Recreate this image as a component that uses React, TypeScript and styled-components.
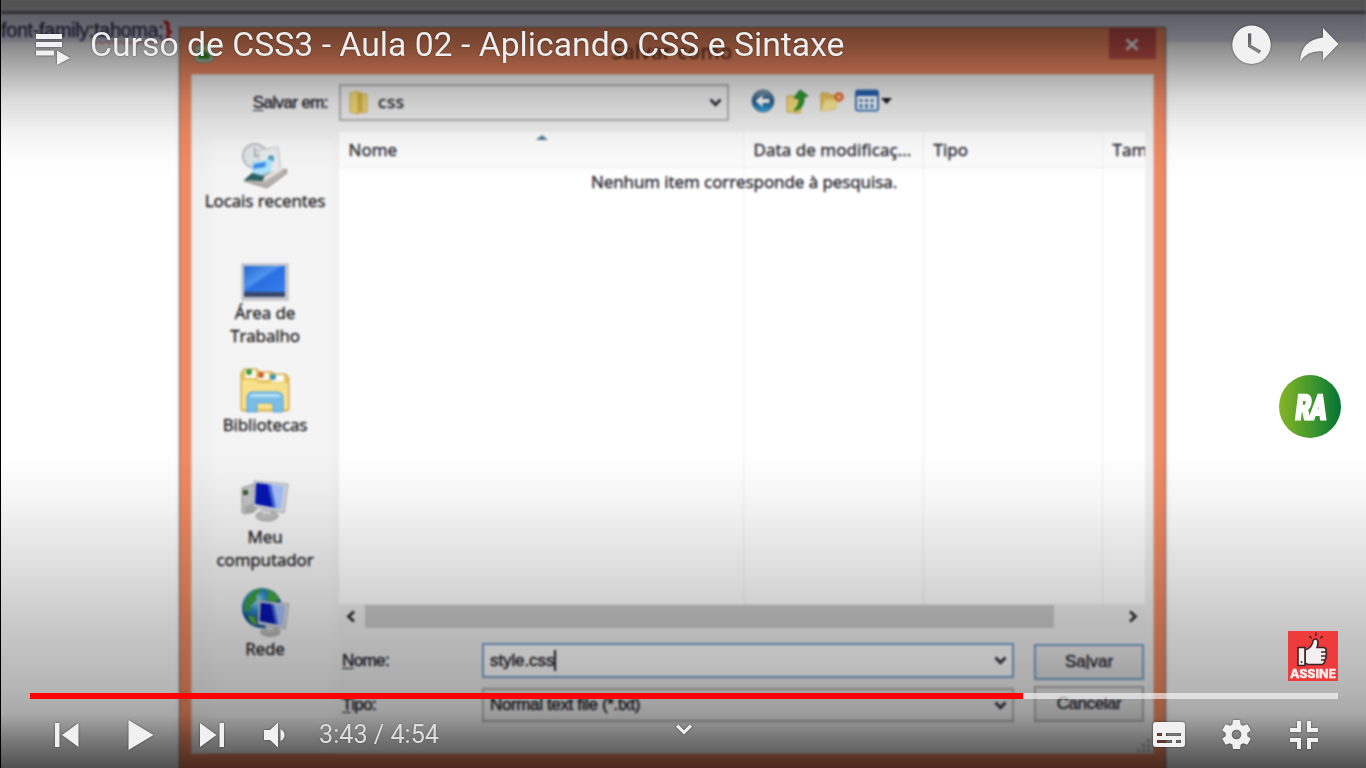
import React from 'react';
import styled, { createGlobalStyle } from 'styled-components';

const GlobalStyle = createGlobalStyle`
  body { margin: 0; background: #000; }
  *, *::before, *::after { box-sizing: border-box; }
`;

const UI = '"Open Sans", "Noto Sans", sans-serif';
const CLASSIC = '"Liberation Sans", Arial, sans-serif';

/* ---------- Page ---------- */

const Player = styled.div`
  position: relative;
  width: 1366px;
  height: 768px;
  overflow: hidden;
  background: #fff;
  border-left: 1px solid #000;
`;

const Video = styled.div`
  height: 768px;
  filter: blur(0.82px);
  -webkit-text-stroke: 0.4px currentColor;
`;

const EditorBar = styled.div`
  height: 14px;
  background: #d2d2d2;
  border-bottom: 3px solid #747474;
`;

const EditorLine = styled.div`
  height: 28px;
  padding-top: 4px;
  background: #e0e0f2;
  font: 20px/24px ${CLASSIC};
  letter-spacing: -0.4px;
  color: #33335c;
  white-space: nowrap;
`;

const Misspelled = styled.span`
  text-decoration: underline wavy #d0303a 1px;
  text-underline-offset: 3px;
`;

const Brace = styled.b`
  font-size: 22px;
  color: #e0141e;
`;

/* ---------- Dialog window ---------- */

const Dialog = styled.section`
  position: absolute;
  left: 178px;
  top: 27px;
  width: 987px;
  height: 745px;
  display: flex;
  flex-direction: column;
  padding: 0 11px 17px 11px;
  background: #f08a62;
  border: 1px solid #8d6a60;
  box-shadow: 0 0 3px rgba(80, 120, 130, 0.35);
`;

const TitleBar = styled.header`
  display: flex;
  justify-content: space-between;
  height: 46px;
  flex: none;
`;

const AppIcon = styled.svg`
  margin: 15px 0 0 3px;
`;

const DialogTitle = styled.div`
  margin-top: 10px;
  padding-left: 21px;
  font: 20.5px/26px ${UI};
  letter-spacing: 0.4px;
  color: #5c3020;
`;

const CloseButton = styled.button`
  width: 47px;
  height: 31px;
  margin-right: -2px;
  padding: 2px 0 0;
  border: 0;
  background: #c4504a;
  display: grid;
  place-items: center;
`;

const DialogBody = styled.div`
  flex: 1;
  display: flex;
  flex-direction: column;
  background: #f0f0f0;
  border: 1px solid #e2cdc6;
  padding: 9px 8px 0 11px;
`;

const LookInRow = styled.div`
  display: flex;
  align-items: center;
  height: 37px;
`;

const Label = styled.label<{ $width: number; $right?: boolean }>`
  width: ${(p) => p.$width}px;
  text-align: ${(p) => (p.$right ? 'right' : 'left')};
  font: 17px/20px ${CLASSIC};
  letter-spacing: -0.6px;
  color: #22222c;
  flex: none;
  u { text-underline-offset: 2px; }
`;

const Combo = styled.div<{ $width: number; $height: number; $active?: boolean }>`
  width: ${(p) => p.$width}px;
  height: ${(p) => p.$height}px;
  flex: none;
  display: flex;
  align-items: center;
  padding: 0 5px 0 6px;
  background: ${(p) => (p.$active ? '#fff' : '#ededed')};
  border: 2px solid ${(p) => (p.$active ? '#76a2cf' : '#b2b2b2')};
  font: 17px/20px ${CLASSIC};
  letter-spacing: -0.1px;
  color: #1c1c26;
`;

const ComboText = styled.span<{ $ui?: boolean; $tight?: boolean }>`
  flex: 1;
  display: flex;
  align-items: center;
  ${(p) => p.$tight && 'letter-spacing: -0.36px;'}
  ${(p) => p.$ui && `font: 17px/20px ${UI}; padding: 0 0 2px 7px; letter-spacing: .8px;`}
`;

const Caret = styled.i`
  width: 2px;
  height: 21px;
  background: #222;
`;

const Tools = styled.div`
  display: flex;
  align-items: center;
  gap: 10px;
  padding: 0 0 3px 22px;
`;

const Middle = styled.div`
  display: flex;
  height: 631px;
`;

const Places = styled.nav`
  width: 136px;
  margin-top: 18px;
  padding-right: 12px;
  flex: none;
  display: flex;
  flex-direction: column;
  background: linear-gradient(90deg, #f0f0f0, #f4f4f4 12%, #f4f4f4 92%, #f0f0f0);
`;

const Place = styled.div`
  height: 112px;
  text-align: center;
  white-space: pre-line;
  font: 17px/22.5px ${UI};
  letter-spacing: -0.1px;
  color: #1e1e24;
`;

const PlaceIcon = styled.div`
  height: 51px;
  display: flex;
  align-items: flex-end;
  justify-content: center;
  svg { display: block; }
`;

const PlaceName = styled.div`
  margin: 0 -4px;
`;

const Content = styled.div`
  width: 806px;
  padding-top: 11px;
  display: flex;
  flex-direction: column;
`;

const List = styled.div`
  height: 472px;
  background: #fff;
  display: flex;
  flex-direction: column;
`;

const Columns = styled.div`
  display: grid;
  grid-template-columns: 405px 180px 179px 42px;
  flex: 1;
`;

const Column = styled.div`
  border-right: 1px solid #f0f0f3;
  overflow: hidden;
  &:last-child { border-right: 0; }
`;

const ColumnHead = styled.div`
  height: 36px;
  display: flex;
  align-items: center;
  padding-left: 9.5px;
  background: #fcfcfc;
  border-bottom: 1px solid #ececef;
  font: 17px/22px ${UI};
  letter-spacing: 0.1px;
  color: #2a2a34;
  white-space: nowrap;
`;

const SortMark = styled.svg`
  margin: -25px 0 0 139px;
`;

const EmptyText = styled.div`
  margin-top: -434px;
  height: 434px;
  text-align: center;
  font: 17px/24px ${UI};
  letter-spacing: -0.06px;
  padding-left: 4px;
  color: #26262e;
`;

const Scroll = styled.div`
  height: 25px;
  display: flex;
  align-items: center;
  padding: 0 7px 0 7px;
  background: #eee;
`;

const Thumb = styled.div`
  width: 689px;
  height: 23px;
  margin: 0 auto 0 9px;
  background: #cacaca;
`;

const Form = styled.div`
  display: flex;
  padding: 14px 0 0 3px;
  gap: 20px;
`;

const Fields = styled.div`
  display: flex;
  flex-direction: column;
  gap: 10px;
`;

const Field = styled.div`
  display: flex;
  align-items: center;
`;

const Buttons = styled.div`
  display: flex;
  flex-direction: column;
  gap: 6px;
  padding-top: 1px;
`;

const Button = styled.button<{ $primary?: boolean }>`
  width: 110px;
  height: 36px;
  padding: 0;
  background: linear-gradient(#ececec, #e0e0e0);
  border: 2px solid ${(p) => (p.$primary ? '#76a2cf' : '#b0b0b0')};
  font: 17px/20px ${CLASSIC};
  letter-spacing: ${(p) => (p.$primary ? 0 : -0.45)}px;
  -webkit-text-stroke: 0.35px currentColor;
  color: #22222c;
`;

const GripRow = styled.div`
  display: flex;
  justify-content: flex-end;
  margin: -14px -6px 0 0;
`;

/* ---------- Player overlay ---------- */

const Chrome = styled.div`
  position: absolute;
  inset: 0 0 0 -1px;
  display: flex;
  flex-direction: column;
  justify-content: space-between;
  background:
    linear-gradient(rgba(0,0,0,.62) 0, rgba(0,0,0,.58) 15px, rgba(0,0,0,.48) 42px,
      rgba(0,0,0,.38) 58px, rgba(0,0,0,.27) 76px, rgba(0,0,0,.14) 100px,
      rgba(0,0,0,.06) 128px, rgba(0,0,0,.02) 150px, transparent 175px),
    linear-gradient(transparent 455px, rgba(0,0,0,.04) 500px, rgba(0,0,0,.16) 590px,
      rgba(0,0,0,.22) 630px, rgba(0,0,0,.29) 690px, rgba(0,0,0,.34) 714px,
      rgba(0,0,0,.52) 740px, rgba(0,0,0,.69) 768px);
`;

const TopBar = styled.div`
  display: flex;
  align-items: flex-start;
  padding: 24px 26px 0 34px;
`;

const VideoTitle = styled.h1`
  flex: 1;
  margin: 1px 0 0 18px;
  font: 400 33.74px/40px Roboto, sans-serif;
  color: #eee;
  text-shadow: 0 0 2px rgba(0, 0, 0, 0.5);
`;

const Glyph = styled.svg`
  display: block;
  flex: none;
  overflow: visible;
  fill: #f1f1f1;
  filter: drop-shadow(0 0 1px rgba(0, 0, 0, 0.55));
`;

const BottomArea = styled.div`
  height: 75px;
  padding: 0 28px 0 30px;
`;

const Track = styled.div`
  height: 6px;
  background: rgba(255, 255, 255, 0.6);
`;

const Played = styled.div`
  width: 993px;
  height: 6px;
  background: #f00;
`;

const Controls = styled.div`
  height: 69px;
  padding: 2px 20px 0 24px;
  display: grid;
  grid-template-columns: 623px 16px 1fr;
  align-items: center;
`;

const Collapse = styled.div`
  margin: -12px 0 0 -1px;
`;

const Cluster = styled.div<{ $end?: boolean }>`
  display: flex;
  align-items: center;
  justify-content: ${(p) => (p.$end ? 'flex-end' : 'flex-start')};
`;

const Slot = styled.div<{ $gap: number }>`
  margin-right: ${(p) => p.$gap}px;
`;

const Time = styled.div`
  font: 25.2px/30px Roboto, sans-serif;
  color: #ddd;
  text-shadow: 0 0 2px rgba(0, 0, 0, 0.4);
  white-space: nowrap;
`;

const ChannelBadge = styled.div`
  position: absolute;
  left: 1278px;
  top: 375px;
  width: 62px;
  height: 63px;
  border-radius: 50%;
  background: linear-gradient(90deg, #86b527, #45992c 50%, #027335);
`;

const SubscribeBadge = styled.div`
  position: absolute;
  left: 1287px;
  top: 631px;
  width: 50px;
  height: 50px;
  background: #ef3b3b;
  svg { display: block; }
`;

const Chevron = ({ color = '#33333a' }: { color?: string }) => (
  <svg width="13" height="9" viewBox="0 0 13 9">
    <path d="M1.5 1.5 6.5 6.8 11.5 1.5" fill="none" stroke={color} strokeWidth="2.8" />
  </svg>
);

const RecentIcon = () => (
  <svg width="48" height="48" viewBox="0 0 48 48">
    <circle cx="14" cy="14" r="12" fill="#dde2e5" stroke="#b2babf" strokeWidth="2" />
    <path d="M14 6v8h6" fill="none" stroke="#9aa3a8" strokeWidth="1.5" />
    <path d="M18 8 37 5l3 25-22 4z" fill="#e7eaec" stroke="#bcc0c2" />
    <path d="M27 15c3-3 6-2 6 2s-5 4-6 1z" fill="#4a98b8" />
    <path d="M11 20l20-3-2 17-18-2z" fill="#a9e0fa" />
    <path d="m13 22 12-2-1 5-12 2z" fill="#3c8de8" />
    <path d="M3 39 26 32 45 27 46 31 26 46z" fill="#b5b0ac" stroke="#958f8a" />
    <path d="m3 38 8-7 15 4-4 4z" fill="#2c5f62" />
    <path d="m22 40 20-12-3-2-16 9z" fill="#e6e4e0" />
  </svg>
);

const DesktopIcon = () => (
  <svg width="48" height="39" viewBox="0 0 48 39">
    <defs>
      <linearGradient id="desk" x1="0" y1="0" x2="1" y2="1">
        <stop offset="0" stopColor="#2566cf" /><stop offset=".4" stopColor="#4e93f0" />
        <stop offset=".5" stopColor="#2a6fe0" /><stop offset="1" stopColor="#3a7ff0" />
      </linearGradient>
    </defs>
    <rect x="1" y="1" width="46" height="36" fill="#c9ccd2" stroke="#a9adb5" />
    <rect x="3" y="3" width="41" height="27" fill="url(#desk)" />
    <rect x="3" y="29" width="41" height="5" fill="#39486a" />
  </svg>
);

const LibraryIcon = () => (
  <svg width="50" height="47" viewBox="0 0 50 47">
    <path d="M1 6 4 2h13l3 3h12l3 2h11l3 4v31q0 2-3 2H3q-2 0-2-2z" fill="#e6c25a" stroke="#c9a045" />
    <path d="M5 3h11v8H5zM18 6h11v7H18zM31 8h13v7H31z" fill="#fdfaf0" />
    <circle cx="9" cy="5" r="3" fill="#3c9b3c" /><circle cx="21" cy="8" r="3" fill="#d2602c" /><circle cx="33" cy="10" r="3" fill="#3d93bd" />
    <path d="M2 13h13l4 3h29v26H2z" fill="#f8e08b" />
    <path d="M7 45V31q0-6 6-6h24q6 0 6 6v14H33v-7q0-2-2-2H19q-2 0-2 2v7z" fill="#79bce6" stroke="#5aa5d8" />
    <path d="M9 30q2-3 6-3h20q5 0 6 3z" fill="#b9e2f8" />
  </svg>
);

const Monitor = ({ x, y, s = 1 }: { x: number; y: number; s?: number }) => (
  <g transform={`translate(${x} ${y}) scale(${s})`}>
    <ellipse cx="14" cy="35" rx="11" ry="5" fill="#bcbcbc" stroke="#959595" />
    <path d="M9 26h9v7H9z" fill="#d8d8d8" />
    <path d="M1 0 35 3 31 32 0 26z" fill="#d6d9dd" stroke="#a4a8ae" />
    <path d="M3 2 31 5 28 28 2 23z" fill="#a5bff8" />
    <path d="M3 2 15 3.3 20 26.5 2 23z" fill="#0716b0" />
    <path d="m15 3.3 3 .3 5 23.5-3-.6z" fill="#4067d8" />
  </g>
);

const ComputerIcon = () => (
  <svg width="48" height="46" viewBox="0 0 48 46">
    <path d="M1 8 13 4v28L3 34 1 32z" fill="#c3c4c6" stroke="#939496" />
    <path d="M2 10h5v5H2z" fill="#355c2f" />
    <path d="M3 27 16 22v8L5 34z" fill="#aaa" />
    <Monitor x={12} y={1} />
  </svg>
);

const NetworkIcon = () => (
  <svg width="49" height="51" viewBox="0 0 49 51">
    <defs>
      <radialGradient id="globe" cx=".35" cy=".3"><stop offset="0" stopColor="#a6def2" /><stop offset=".5" stopColor="#2e8fca" /><stop offset="1" stopColor="#124f98" /></radialGradient>
    </defs>
    <circle cx="21" cy="21" r="20" fill="url(#globe)" />
    <path d="M4 14Q9 3 21 1l-2 5-4 2 1 5-6 5-3 8-4-3z" fill="#3d9c46" />
    <path d="M24 2q9 1 15 10l-7 4-7-4 3-5z" fill="#48a545" />
    <path d="M7 28l7 2 2 9q-8-3-9-11z" fill="#56a93e" />
    <Monitor x={17} y={14} s={0.88} />
  </svg>
);

const places = [
  { name: 'Locais recentes', icon: <RecentIcon /> },
  { name: 'Área de\nTrabalho', icon: <DesktopIcon /> },
  { name: 'Bibliotecas', icon: <LibraryIcon /> },
  { name: 'Meu\ncomputador', icon: <ComputerIcon /> },
  { name: 'Rede', icon: <NetworkIcon /> },
];

const SaveDialog = () => (
  <Dialog>
    <TitleBar>
      <AppIcon width="20" height="20" viewBox="0 0 20 20">
        <rect x="1" y="2" width="18" height="17" rx="3" fill="#c9d4c4" stroke="#81947c" strokeWidth="1.5" />
        <path d="M4 16V9l5-3 7 6v4z" fill="#2f8f2c" />
        <path d="m8 3 5 1-1 6z" fill="#c6dc5a" />
      </AppIcon>
      <DialogTitle>Salvar como</DialogTitle>
      <CloseButton>
        <svg width="14" height="13" viewBox="0 0 14 13"><path d="m1.5 1.5 11 10m0-10-11 10" stroke="#fff" strokeWidth="2.6" /></svg>
      </CloseButton>
    </TitleBar>
    <DialogBody>
      <LookInRow>
        <Label $width={125} $right><u>S</u>alvar em:</Label>
        <div style={{ width: 11 }} />
        <Combo $width={390} $height={37}>
          <svg width="24" height="26" viewBox="0 0 24 26">
            <path d="M3 3 11 1v23l-8-2z" fill="#f0d876" stroke="#d8b850" />
            <path d="m11 3 4-1v20l-4 2z" fill="#d9b644" />
            <path d="M15 4h5v18l-5 1z" fill="#efd878" stroke="#d3b452" />
          </svg>
          <ComboText $ui>css</ComboText>
          <Chevron />
        </Combo>
        <Tools>
          <svg width="24" height="24" viewBox="0 0 24 24">
            <defs><linearGradient id="back" x1="0" y1="0" x2="0" y2="1"><stop offset="0" stopColor="#8aa0b4" /><stop offset=".5" stopColor="#205488" /><stop offset="1" stopColor="#38b0e8" /></linearGradient></defs>
            <circle cx="12" cy="12" r="11" fill="url(#back)" stroke="#4a6d90" />
            <path d="m4.500 12 7-6v4h7v4h-7v4z" fill="#fff" />
          </svg>
          <svg width="24" height="26" viewBox="0 0 24 26">
            <path d="M2 8h7l2 2h7l-3 15-13-1z" fill="#f2dc7c" stroke="#d0aa3e" />
            <path d="M9 22q6-4 5-12H9l6-8 8 6-4 1q1 9-7 13z" fill="#2f9b2f" stroke="#1c6f22" />
          </svg>
          <svg width="26" height="24" viewBox="0 0 26 24">
            <path d="M2 4h7l2 2h8v4l-3 10-14 2z" fill="#e9c75c" stroke="#cfa840" />
            <path d="m6 11 15-1-5 10-14 2z" fill="#fae898" />
            <circle cx="20" cy="8" r="3.500" fill="#f7c29a" stroke="#e66a2c" strokeWidth="2.500" />
          </svg>
          <svg width="37" height="24" viewBox="0 0 37 24">
            <rect x="1" y="1.500" width="22" height="20" rx="2" fill="#f6fafd" stroke="#3a72b4" strokeWidth="2" />
            <path d="M1 2h22v5H1z" fill="#2860b0" />
            <path d="M4.500 10h3v3h-3zm5.500 0h3v3h-3zm5.500 0h3v3h-3zM4.500 15h3v4h-3zm5.500 0h3v4h-3zm5.500 0h3v4h-3z" fill="#4d7db0" />
            <path d="M26 9h11l-5.500 6z" fill="#16161c" />
          </svg>
        </Tools>
      </LookInRow>
      <Middle>
        <Places>
          {places.map((p) => (
            <Place key={p.name}>
              <PlaceIcon>{p.icon}</PlaceIcon>
              <PlaceName>{p.name}</PlaceName>
            </Place>
          ))}
        </Places>
        <Content>
          <List>
            <Columns>
              <Column>
                <ColumnHead>
                  Nome
                  <SortMark width="12" height="7" viewBox="0 0 12 7"><path d="m0 6 6-5 6 5z" fill="#587c92" /></SortMark>
                </ColumnHead>
              </Column>
              <Column><ColumnHead>Data de modificaç...</ColumnHead></Column>
              <Column><ColumnHead>Tipo</ColumnHead></Column>
              <Column><ColumnHead>Tam</ColumnHead></Column>
            </Columns>
            <EmptyText>Nenhum item corresponde à pesquisa.</EmptyText>
          </List>
          <Scroll>
            <svg width="10" height="13" viewBox="0 0 10 13"><path d="M8 1.500 2.500 6.500 8 11.500" fill="none" stroke="#2c2c32" strokeWidth="2.800" /></svg>
            <Thumb />
            <svg width="10" height="13" viewBox="0 0 10 13"><path d="m2 1.500 5.500 5L2 11.500" fill="none" stroke="#2c2c32" strokeWidth="2.800" /></svg>
          </Scroll>
          <Form>
            <Fields>
              <Field>
                <Label $width={140}><u>N</u>ome:</Label>
                <Combo $width={532} $height={35} $active>
                  <ComboText>style.css<Caret /></ComboText>
                  <Chevron />
                </Combo>
              </Field>
              <Field>
                <Label $width={140}><u>T</u>ipo:</Label>
                <Combo $width={532} $height={34}>
                  <ComboText $tight>Normal text file (*.txt)</ComboText>
                  <Chevron />
                </Combo>
              </Field>
            </Fields>
            <Buttons>
              <Button $primary>Sa<u>l</u>var</Button>
              <Button>Cancelar</Button>
            </Buttons>
          </Form>
        </Content>
      </Middle>
      <GripRow>
        <svg width="14" height="14" viewBox="0 0 14 14"><path d="M10 1h3v3h-3zM10 6h3v3h-3zM5 6h3v3H5zM10 11h3v3h-3zM5 11h3v3H5zM0 11h3v3H0z" fill="#b4b4b4" /></svg>
      </GripRow>
    </DialogBody>
  </Dialog>
);

export default function App() {
  return (
    <>
      <GlobalStyle />
      <Player>
        <Video>
          <EditorBar />
          <EditorLine>font-family:<Misspelled>tahoma</Misspelled>;<Brace>{'}'}</Brace></EditorLine>
          <SaveDialog />
        </Video>
        <Chrome>
          <TopBar>
            <Glyph width="38" height="44" viewBox="0 0 38 44">
              <path d="M2 10h26v5H2zM2 18h26v5H2zM2 26.500h18v5H2zM23 26.500 36 34 23 41z" />
            </Glyph>
            <VideoTitle>Curso de CSS3 - Aula 02 - Aplicando CSS e Sintaxe</VideoTitle>
            <Glyph width="40" height="42" viewBox="0 0 40 42">
              <path fillRule="evenodd" d="M19.500 1.500a19 19 0 1 0 0 38.500 19 19 0 0 0 0-38.500zM16 9.500h3.200v11.500l9.800 5.700-1.900 2.800L16 22.800z" />
            </Glyph>
            <div style={{ width: 26 }} />
            <Glyph width="42" height="42" viewBox="0 0 42 42">
              <path d="M25 4 40.500 20 25 36V27.500Q10 26 2 37.500 3 16 25 13.500z" />
            </Glyph>
          </TopBar>
          <BottomArea>
            <Track><Played /></Track>
            <Controls>
              <Cluster>
                <Slot $gap={49}><Glyph width="25" height="24" viewBox="0 0 25 24"><path d="M1 0h4.500v24H1zM24.500 0v24L8 12z" /></Glyph></Slot>
                <Slot $gap={46}><Glyph width="26" height="30" viewBox="0 0 26 30"><path d="M.5 0 25.500 15 .5 30z" /></Glyph></Slot>
                <Slot $gap={39}><Glyph width="25" height="24" viewBox="0.5 0 25 24"><path d="M.5 0 17 12 .5 24zM20 0h4.500v24H20z" /></Glyph></Slot>
                <Slot $gap={34}><Glyph width="21" height="26" viewBox="0 0 21 26"><path d="M0 8h6l8-7.500v25L6 18H0zM16.500 7q4 2 4 6t-4 6z" /></Glyph></Slot>
                <Time>3:43 / 4:54</Time>
              </Cluster>
              <Collapse>
                <Glyph width="16" height="14" viewBox="0 2 16 14"><path d="M2.200 4.500 8 10.200l5.800-5.700L16 6.700 8 14.500 0 6.700z" /></Glyph>
              </Collapse>
              <Cluster $end>
                <Slot $gap={37}><Glyph width="32" height="25" viewBox="0 0 32 25"><path fillRule="evenodd" d="M3 0h26q3 0 3 3v19q0 3-3 3H3q-3 0-3-3V3q0-3 3-3zM4 11v3h5v-3zm9 0v3h15v-3zM4 18v3h15v-3zm19 0v3h5v-3z" /></Glyph></Slot>
                <Slot $gap={39}>
                  <Glyph width="29" height="29" viewBox="2 2 20 20">
                    <path d="M19.430 12.980c.04-.32.07-.64.07-.98s-.03-.66-.07-.98l2.110-1.650c.19-.15.24-.42.12-.64l-2-3.460c-.12-.22-.39-.3-.61-.22l-2.490 1c-.52-.4-1.080-.73-1.690-.98l-.38-2.650C14.460 2.180 14.250 2 14 2h-4c-.25 0-.46.18-.49.42l-.38 2.650c-.61.25-1.170.59-1.690.98l-2.490-1c-.23-.09-.49 0-.61.22l-2 3.460c-.13.22-.07.49.12.64l2.110 1.650c-.04.32-.07.65-.07.98s.03.66.07.98l-2.110 1.650c-.19.15-.24.42-.12.64l2 3.460c.12.22.39.3.61.22l2.490-1c.52.4 1.080.73 1.690.98l.38 2.650c.03.24.24.42.49.42h4c.25 0 .46-.18.49-.42l.38-2.650c.61-.25 1.170-.59 1.690-.98l2.490 1c.23.09.49 0 .61-.22l2-3.460c.12-.22.07-.49-.12-.64l-2.110-1.650zM12 15.300a3.300 3.300 0 1 1 0-6.600 3.300 3.300 0 0 1 0 6.600z" />
                  </Glyph>
                </Slot>
                <Glyph width="28" height="28" viewBox="0 0 28 28"><path d="M7 0h4v11H0V7h7zM17 0h4v7h7v4H17zM0 17h11v11H7v-7H0zM17 17h11v4h-7v7h-4z" /></Glyph>
              </Cluster>
            </Controls>
          </BottomArea>
        </Chrome>
        <ChannelBadge>
          <svg width="62" height="63" viewBox="0 0 62 63">
            <g fill="#fff" stroke="#fff" strokeWidth="2.800" fontFamily="Roboto, sans-serif" fontWeight="900" fontSize="33.500" transform="translate(4.500 0.500) skewX(-7)">
              <text x="16.500" y="43.500" textLength="15" lengthAdjust="spacingAndGlyphs">R</text>
              <text x="31" y="43.500" textLength="16" lengthAdjust="spacingAndGlyphs">A</text>
            </g>
          </svg>
        </ChannelBadge>
        <SubscribeBadge>
          <svg width="50" height="50" viewBox="0 0 50 50">
            <path d="m21.500 5 2 2.500M28 1.500V5M34.500 5l-2 2.500" stroke="#4a2226" strokeWidth="1.500" />
            <path d="M17 19q7-2 8-9 1-3 4-1.500 2 2 0 8h7q3 1 2 4 1 2 0 4 1 2-1 4 0 4-3 5H20l-3-1.500z" fill="#f4f0f0" stroke="#402226" strokeWidth="1.600" />
            <path d="M33 21h5M33 25h5M33 29h4" stroke="#402226" strokeWidth="1.400" />
            <path d="M10 16.500h7v18h-7z" fill="#f4f0f0" stroke="#402226" strokeWidth="1.600" />
            <circle cx="13.500" cy="31" r="1" fill="#402226" />
            <text x="2" y="47" textLength="46" lengthAdjust="spacingAndGlyphs" fill="#f6eeee" stroke="#f6eeee" strokeWidth=".3" fontFamily="Inter, sans-serif" fontWeight="800" fontSize="11.500">ASSINE</text>
          </svg>
        </SubscribeBadge>
      </Player>
    </>
  );
}
